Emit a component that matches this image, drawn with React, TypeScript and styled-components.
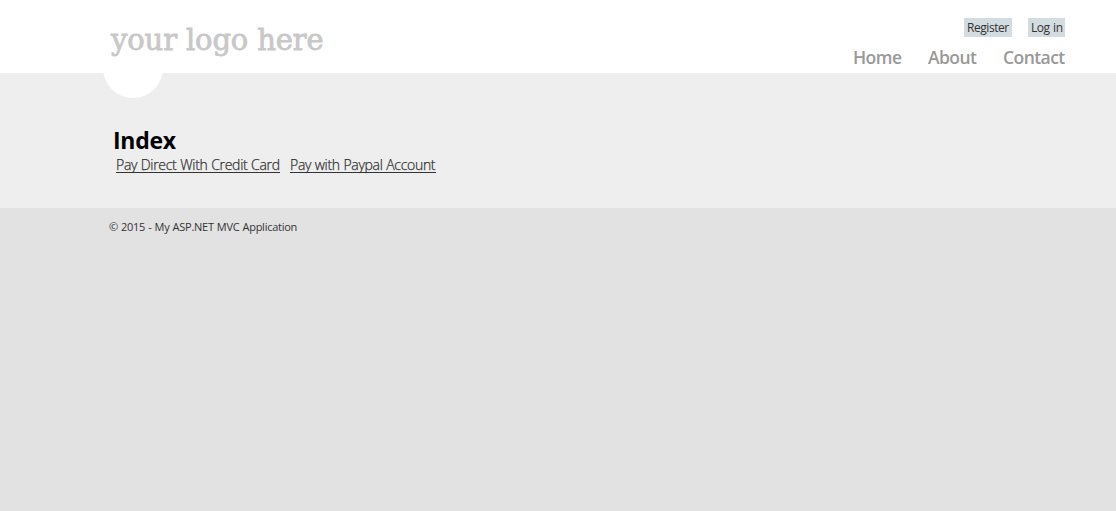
import React from "react";
import styled, { createGlobalStyle } from "styled-components";

const GlobalStyle = createGlobalStyle`
  html, body { margin: 0; background: #e2e2e2; }
  body { color: #333; font-family: "Open Sans", "Noto Sans", sans-serif; }
`;

const Header = styled.header`
  position: relative;
  box-sizing: border-box;
  height: 73px;
  padding: 18px 51px 0 111px;
  display: flex;
  justify-content: space-between;
  background: #fff;
`;

const Notch = styled.div`
  position: absolute;
  left: 103px;
  top: 38px;
  width: 60px;
  height: 60px;
  border-radius: 50%;
  background: #fff;
`;

const Logo = styled.a`
  position: relative;
  height: 44px;
  font: 400 29px/45px "DejaVu Serif", serif;
  letter-spacing: -0.13px;
  color: #c8c8c8;
  -webkit-text-stroke: 0.8px #c8c8c8;
  white-space: nowrap;
`;

const HeaderRight = styled.div`
  display: flex;
  flex-direction: column;
  align-items: flex-end;
`;

const Account = styled.div`
  display: flex;
  gap: 16px;
`;

const AccountLink = styled.a<{ $width: number }>`
  box-sizing: border-box;
  width: ${(p) => p.$width}px;
  height: 19px;
  padding-left: 3px;
  background: #d3dce0;
  font-size: 12px;
  line-height: 20px;
  letter-spacing: -0.45px;
  word-spacing: 0.8px;
  white-space: nowrap;
`;

const Nav = styled.nav`
  display: flex;
  gap: 25px;
  margin-top: 7px;
`;

const NavLink = styled.a<{ $width: number }>`
  width: ${(p) => p.$width}px;
  font-size: 17.5px;
  font-weight: 600;
  line-height: 26px;
  letter-spacing: -0.55px;
  color: #999;
  white-space: nowrap;
`;

const Main = styled.main`
  box-sizing: border-box;
  height: 135px;
  padding: 53px 0 0 113px;
  background: #eee;
`;

const Title = styled.h2`
  margin: 0;
  font-size: 23px;
  font-weight: 700;
  line-height: 28px;
  letter-spacing: -0.3px;
  color: #000;
`;

const Links = styled.div`
  display: flex;
  gap: 10px;
  padding: 1px 0 0 3px;
`;

const PayLink = styled.a<{ $width: number }>`
  box-sizing: border-box;
  width: ${(p) => p.$width}px;
  height: 18px;
  border-bottom: 1px solid #333;
  font-size: 14px;
  font-weight: 300;
  line-height: 20px;
  letter-spacing: -0.3px;
  word-spacing: 0.3px;
  -webkit-text-stroke: 0.25px #333;
  white-space: nowrap;
`;

const Footer = styled.footer`
  padding: 10px 0 0 109px;
  font-size: 11px;
  line-height: 18px;
  letter-spacing: -0.26px;
  word-spacing: 0.5px;
`;

export default function App() {
  return (
    <>
      <GlobalStyle />
      <Header>
        <Notch />
        <Logo>your logo here</Logo>
        <HeaderRight>
          <Account>
            <AccountLink $width={48}>Register</AccountLink>
            <AccountLink $width={37}>Log in</AccountLink>
          </Account>
          <Nav>
            <NavLink $width={50}>Home</NavLink>
            <NavLink $width={50}>About</NavLink>
            <NavLink $width={62}>Contact</NavLink>
          </Nav>
        </HeaderRight>
      </Header>
      <Main>
        <Title>Index</Title>
        <Links>
          <PayLink $width={164}>Pay Direct With Credit Card</PayLink>
          <PayLink $width={146}>Pay with Paypal Account</PayLink>
        </Links>
      </Main>
      <Footer>© 2015 - My ASP.NET MVC Application</Footer>
    </>
  );
}
